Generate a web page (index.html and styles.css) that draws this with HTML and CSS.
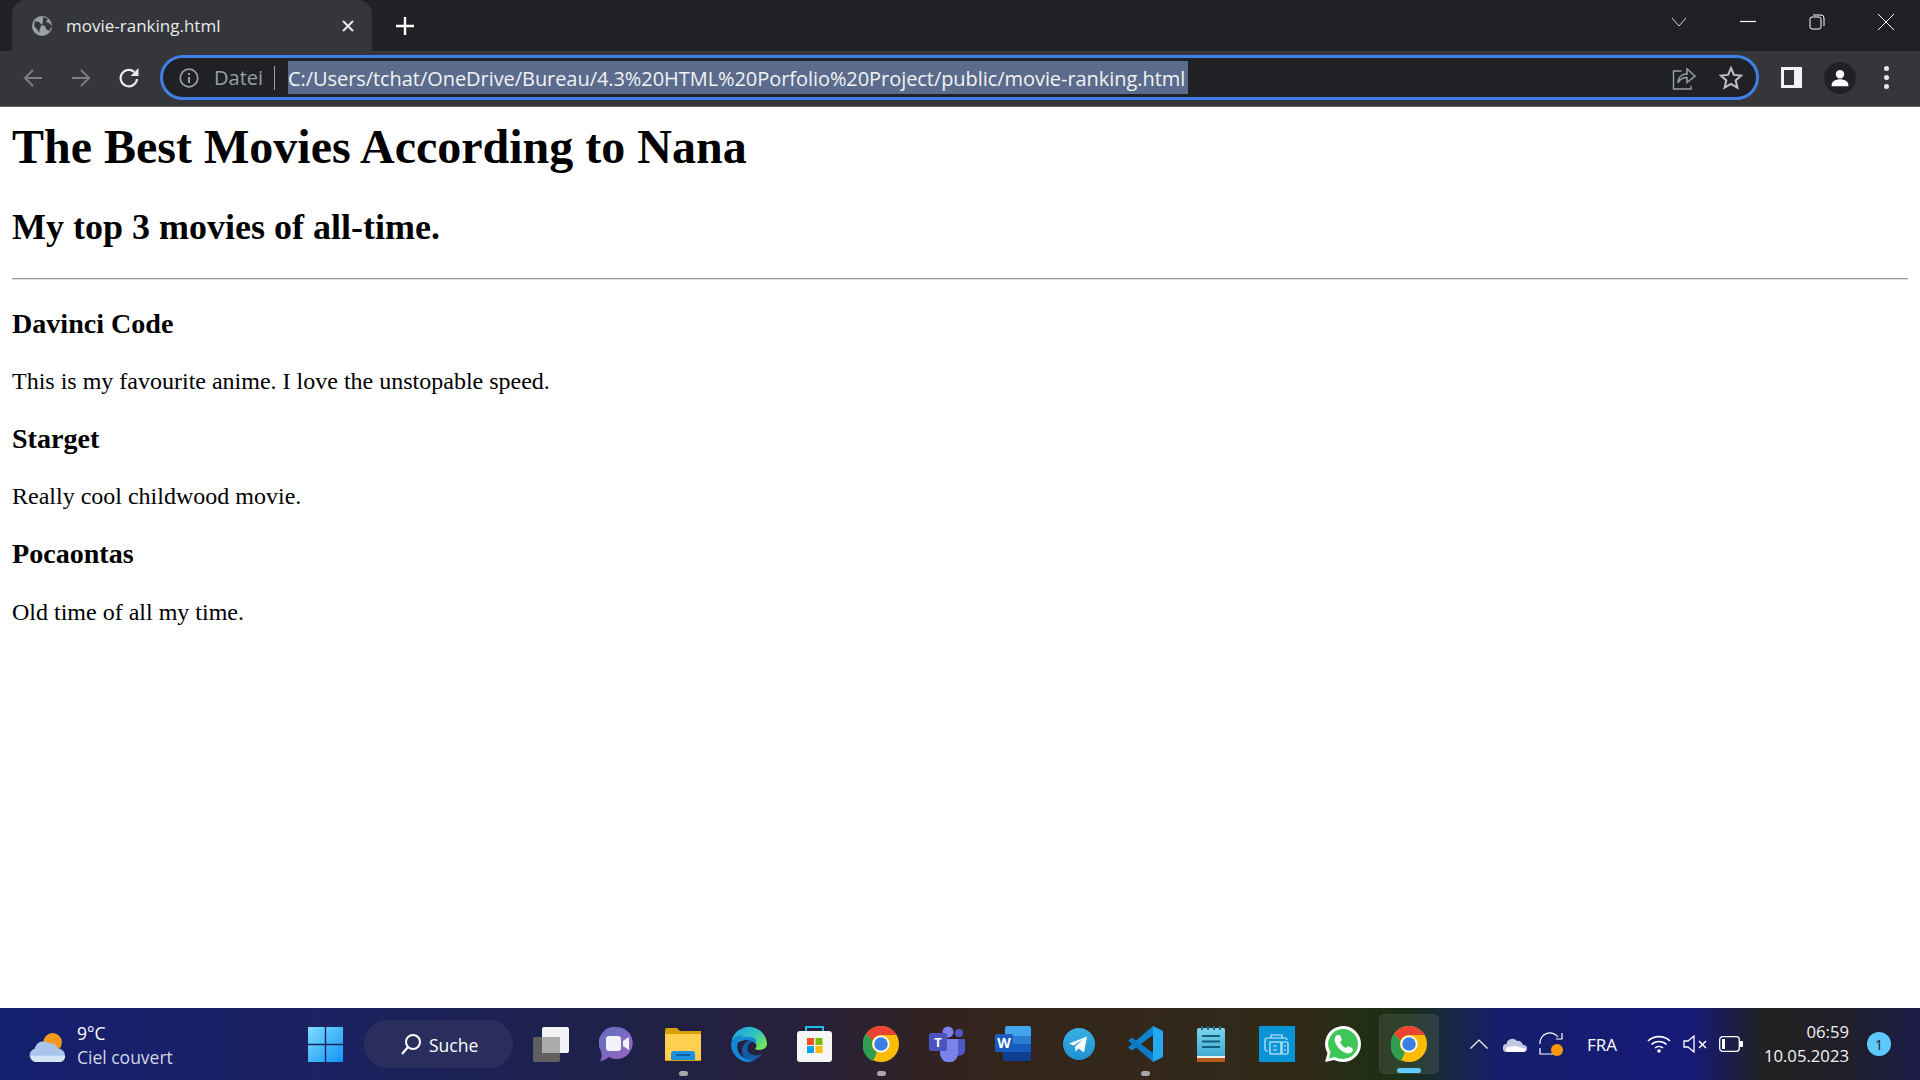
FILE: index.html
```html
<!DOCTYPE html>
<html lang="en">
<head>
<meta charset="utf-8">
<title>movie-ranking.html</title>
<link rel="stylesheet" href="styles.css">
</head>
<body>
<svg class="defs" width="0" height="0" aria-hidden="true">
  <defs>
    <symbol id="chrome" viewBox="0 0 36 36">
      <circle cx="18" cy="18" r="18" fill="#fbbc04"/>
      <path d="M18 0A18 18 0 0 1 33.6 9H18a9 9 0 0 0-8.3 5.5L3.2 7.7A18 18 0 0 1 18 0Z" fill="#ea4335"/>
      <path d="M3.2 7.7l6.4 6.6A9 9 0 0 0 14 26.2l-4 9.1A18 18 0 0 1 3.2 7.7Z" fill="#2f9e4f"/>
      <circle cx="18" cy="18" r="8.6" fill="#fff"/>
      <circle cx="18" cy="18" r="6.8" fill="#3b7ee6"/>
    </symbol>
  </defs>
</svg>
<div class="screen">
  <header class="tabstrip">
    <div class="tab">
      <svg class="favicon" viewBox="0 0 20 20"><circle cx="10" cy="10" r="10" fill="#9aa0a6"/><path d="M3 5l4 1 3 3-2 3-1 5-2-4-3-3zM11 1l5 2-2 3 3 1 3 3-3 5-3-2-1-3-3-1 1-4z" fill="#35363a"/></svg>
      <span class="tab-title">movie-ranking.html</span>
      <svg class="tab-close" viewBox="0 0 12 12"><path d="M1 1l10 10M11 1L1 11" stroke="#e8eaed" stroke-width="2"/></svg>
    </div>
    <svg class="newtab" viewBox="0 0 18 18"><path d="M9 0v18M0 9h18" stroke="#fff" stroke-width="2.4"/></svg>
    <div class="window-controls">
      <svg class="wc" viewBox="0 0 16 16"><path d="M1 4l7 8 7-8" fill="none" stroke="#d5d6d8" stroke-width="1"/></svg>
      <svg class="wc" viewBox="0 0 16 16"><path d="M0 7.5h16" stroke="#fff" stroke-width="1.2"/></svg>
      <svg class="wc" viewBox="0 0 16 16"><rect x="1" y="3" width="11" height="12" rx="2" fill="none" stroke="#fff"/><path d="M4 1h8a3 3 0 0 1 3 3v8" fill="none" stroke="#fff"/></svg>
      <svg class="wc" viewBox="0 0 16 16"><path d="M0 0l16 16M16 0L0 16" stroke="#fff" stroke-width="1"/></svg>
    </div>
  </header>
  <nav class="toolbar">
    <svg class="nav-icon" viewBox="0 0 20 20"><path d="M19 10H2M10 2l-8 8 8 8" fill="none" stroke="#7c7e82" stroke-width="2"/></svg>
    <svg class="nav-icon" viewBox="0 0 20 20"><path d="M1 10h17M10 2l8 8-8 8" fill="none" stroke="#7c7e82" stroke-width="2"/></svg>
    <svg class="nav-icon reload" viewBox="0 0 20 20"><path d="M18 11A8.200 8.200 0 1 1 15.200 3.900" fill="none" stroke="#e8eaed" stroke-width="2.200"/><path d="M19.500 0v8h-8z" fill="#e8eaed"/></svg>
    <div class="omnibox">
      <svg class="info" viewBox="0 0 20 20"><circle cx="10" cy="10" r="8.800" fill="none" stroke="#9aa0a6" stroke-width="1.700"/><path d="M10 9v6M10 5v2" stroke="#9aa0a6" stroke-width="2"/></svg>
      <span class="scheme">Datei</span>
      <span class="divider"></span>
      <span class="url">C:/Users/tchat/OneDrive/Bureau/4.3%20HTML%20Porfolio%20Project/public/movie-ranking.html</span>
      <span class="omni-space"></span>
      <svg class="omni-icon" viewBox="0 0 24 24"><path d="M9.500 5H1.500v18h17.500v-3" fill="none" stroke="#9aa0a6" stroke-width="1.400"/><path d="M6 17c0-6 4-9 9-9V3l8 7-8 6.500v-5c-4 0-7 1.500-9 5.500z" fill="none" stroke="#9aa0a6" stroke-width="1.500"/></svg>
      <svg class="omni-icon star" viewBox="0 0 24 24"><path d="M12 2l2.900 6.900 7.400.6-5.600 4.900 1.700 7.300L12 17.800l-6.400 3.900 1.700-7.300-5.600-4.900 7.400-.6z" fill="none" stroke="#bdc1c6" stroke-width="2"/></svg>
    </div>
    <span class="sidepanel"></span>
    <span class="profile"><svg viewBox="0 0 24 24"><circle cx="12" cy="7.500" r="5" fill="#fff"/><path d="M2 22v-2c0-4 5-6.500 10-6.500s10 2.500 10 6.500v2z" fill="#fff"/></svg></span>
    <span class="menu"><i></i><i></i><i></i></span>
  </nav>
  <main class="page">
    <h1>The Best Movies According to Nana</h1>
    <h2>My top 3 movies of all-time.</h2>
    <hr>
    <h3>Davinci Code</h3>
    <p>This is my favourite anime. I love the unstopable speed.</p>
    <h3>Starget</h3>
    <p>Really cool childwood movie.</p>
    <h3>Pocaontas</h3>
    <p>Old time of all my time.</p>
  </main>
  <footer class="taskbar">
    <div class="weather">
      <svg class="weather-icon" viewBox="0 0 36 30"><circle cx="23" cy="10" r="9" fill="#f39a1e"/><path d="M7 29a6.500 6.500 0 0 1-1.500-12.800A9 9 0 0 1 20 11a7 7 0 0 1 8 5.200A6.500 6.500 0 0 1 30 29z" fill="#a9c6ea"/><path d="M7 29a5 5 0 0 1-5-6h33a5 5 0 0 1-5 6z" fill="#d5e4f6"/></svg>
      <div class="weather-text"><span class="temp">9°C</span><span class="cond">Ciel couvert</span></div>
    </div>
    <svg class="start" viewBox="0 0 35 35"><defs><linearGradient id="win" x1="0" y1="0" x2="1" y2="1"><stop offset="0" stop-color="#7fdcff"/><stop offset="1" stop-color="#0f94f5"/></linearGradient></defs><path d="M0 0h16.800v16.800H0zM18.200 0H35v16.800H18.200zM0 18.200h16.800V35H0zM18.200 18.200H35V35H18.200z" fill="url(#win)"/></svg>
    <div class="search">
      <svg viewBox="0 0 22 22"><circle cx="13" cy="9" r="7" fill="none" stroke="#fff" stroke-width="2"/><path d="M8 14l-6 7" stroke="#fff" stroke-width="2.200"/></svg>
      <span>Suche</span>
    </div>
    <div class="apps">
      <div class="app"><svg viewBox="0 0 36 36"><rect x="9" y="1" width="27" height="26" rx="2" fill="#f3f3f3"/><rect x="0" y="11" width="27" height="25" rx="2" fill="#5f5f5f"/><rect x="9" y="11" width="18" height="16" fill="#aaa"/></svg></div>
      <div class="app"><svg viewBox="0 0 36 36"><defs><linearGradient id="chat" x1="0" y1="0" x2="1" y2="1"><stop offset="0" stop-color="#5f6fc0"/><stop offset="1" stop-color="#9a63c4"/></linearGradient></defs><path d="M18 1a16 16 0 1 1-8 30c-3 2-6 4-9 4 2-3 2-6 1-10A16 16 0 0 1 18 1z" fill="url(#chat)"/><rect x="7" y="10" width="15" height="15" rx="3" fill="#f2f2fa"/><path d="M24 15l6-4v13l-6-4z" fill="#f2f2fa"/></svg></div>
      <div class="app"><svg viewBox="0 0 36 34"><path d="M0 3a2 2 0 0 1 2-2h10l3 3h21v30H0z" fill="#d8a002"/><path d="M0 7h36v26H0z" fill="#ffd04f"/><path d="M6 33V27a3 3 0 0 1 3-3h18a3 3 0 0 1 3 3v6z" fill="#1b8fe0"/><path d="M11 28h14" stroke="#0d5fa8" stroke-width="2"/></svg><i class="dot"></i></div>
      <div class="app"><svg viewBox="0 0 36 36"><defs><linearGradient id="edge" x1="0.100" y1="0" x2="1" y2="0.600"><stop offset="0" stop-color="#1b9fd8"/><stop offset="0.600" stop-color="#33c6c0"/><stop offset="1" stop-color="#6ee35c"/></linearGradient></defs><path d="M1 13A18 18 0 0 1 36 18c0 4-4 6-8 6-3 0-4-1-4-2 2-1 2-3 0-5-4-4-13-4-18 0-2 1-4 3-5 5z" fill="url(#edge)"/><path d="M0 18c1-6 7-10 13-8-6 3-9 10-5 17 3 5 10 8 17 6-3 2-6 3-7 3A18 18 0 0 1 0 18z" fill="#1487d8"/><path d="M24 14c-7-1-13 4-13 11 0 6 5 10 11 9 3-1 7-3 9-6-4 2-10 2-13-1-2-2-2-6 0-9 2-2 4-3 6-4z" fill="#135ca8"/><path d="M8 14c5-4 12-4 16-1 2 2 2 3 0 4-4-4-10-3-16-3z" fill="#1487d8"/></svg></div>
      <div class="app"><svg viewBox="0 0 36 36"><rect y="5" width="35" height="31" rx="3" fill="#f6f6f6"/><path d="M9 5V1h17v4" fill="none" stroke="#1ebbee" stroke-width="2"/><rect x="10" y="12" width="7" height="7" fill="#f25022"/><rect x="18.500" y="12" width="7" height="7" fill="#7fba00"/><rect x="10" y="20" width="7" height="7" fill="#00a4ef"/><rect x="18.500" y="20" width="7" height="7" fill="#ffb900"/></svg></div>
      <div class="app"><svg viewBox="0 0 36 36"><use href="#chrome"/></svg><i class="dot"></i></div>
      <div class="app"><svg viewBox="0 0 36 36"><circle cx="19" cy="6" r="5.500" fill="#7b83eb"/><circle cx="30" cy="7" r="4" fill="#5059c9"/><path d="M27 13h8a1 1 0 0 1 1 1v10a6 6 0 0 1-9 5z" fill="#5059c9"/><path d="M11 13h17a1 1 0 0 1 1 1v13a9 9 0 0 1-18 1z" fill="#7b83eb"/><rect y="7" width="18" height="18" rx="2" fill="#4b53bc"/><text x="9" y="21" class="teams-t">T</text></svg></div>
      <div class="app"><svg viewBox="0 0 36 36"><path d="M10 2a2 2 0 0 1 2-2h22a2 2 0 0 1 2 2v8H10z" fill="#41a5ee"/><rect x="8" y="10" width="28" height="8" fill="#2b7cd3"/><rect x="8" y="18" width="28" height="8" fill="#185abd"/><path d="M8 26h28v7a2 2 0 0 1-2 2H10a2 2 0 0 1-2-2z" fill="#103f91"/><rect y="8" width="18" height="18" rx="2" fill="#1a5dbb"/><text x="9" y="22" class="word-w">W</text></svg></div>
      <div class="app"><svg class="small" viewBox="0 0 32 32"><defs><linearGradient id="tg" x1="0.500" y1="0" x2="0.500" y2="1"><stop offset="0" stop-color="#38b0e3"/><stop offset="1" stop-color="#1d93d2"/></linearGradient></defs><circle cx="16" cy="16" r="16" fill="url(#tg)"/><path d="M6 15.500l18-7-3 16-5.500-4-3 3-.5-4.800L20 11.500l-9.500 6z" fill="#fff"/></svg></div>
      <div class="app"><svg viewBox="0 0 36 36"><path d="M26 0l10 5v26l-10 5z" fill="#23a9f2"/><path d="M26 0v9L11 20l-6 4.500-4-3L26 0z" fill="#0f82d2"/><path d="M26 36v-9L11 16 5 11.500l-4 3L26 36z" fill="#0d79c6"/></svg><i class="dot"></i></div>
      <div class="app"><svg class="note" viewBox="0 0 28 36"><defs><linearGradient id="nt" x1="0" y1="0" x2="0" y2="1"><stop offset="0" stop-color="#7fd4ef"/><stop offset="1" stop-color="#3aa8cf"/></linearGradient></defs><rect y="2" width="28" height="30" rx="2" fill="url(#nt)"/><rect y="31" width="28" height="5" fill="#b8591d"/><rect y="30" width="28" height="2" fill="#f2f2f2"/><path d="M5 0v4M11 0v4M17 0v4M23 0v4" stroke="#116a8a" stroke-width="2"/><path d="M5 10h18M5 15.500h18M5 21h18" stroke="#11607f" stroke-width="2"/></svg></div>
      <div class="app"><svg viewBox="0 0 36 36"><rect width="36" height="36" fill="#0a94d8"/><g fill="none" stroke="#cfeaf8" stroke-width="1.200"><path d="M12 12V9h11v3"/><path d="M9 25H8a2 2 0 0 1-2-2v-9a2 2 0 0 1 2-2h18a2 2 0 0 1 2 2"/><rect x="11" y="16" width="11" height="12"/><rect x="23" y="16" width="6" height="12" rx="1"/><path d="M14 20h4M14 24h4M25 20h2M25 24h2"/></g></svg></div>
      <div class="app"><svg viewBox="0 0 36 36"><path d="M18 0a18 18 0 0 1 0 36c-3 0-6-1-9-2l-9 2 2.500-9A18 18 0 0 1 18 0z" fill="#fff"/><path d="M18 3a15 15 0 0 1 0 30c-3 0-6-1-8-2l-6 1.500L5.500 26A15 15 0 0 1 18 3z" fill="#3fc658"/><path d="M12 9c-2 1-3 4-2 7 2 5 6 9 11 11 3 1 6 0 7-3l-1-2-4-2-2 2c-3-1-5-4-6-6l2-2-2-5z" fill="#fff"/></svg></div>
      <div class="app active"><svg viewBox="0 0 36 36"><use href="#chrome"/></svg><i class="bar"></i></div>
    </div>
    <div class="tray">
      <svg class="tray-chevron" viewBox="0 0 18 10"><path d="M0.500 9.500L9 1l8.500 8.500" fill="none" stroke="#fff" stroke-width="1.200"/></svg>
      <svg class="tray-cloud" viewBox="0 0 24 15"><path d="M4 15a4 4 0 0 1-.5-8A6 6 0 0 1 14 4a5 5 0 0 1 6 4 3.500 3.500 0 0 1 1 7z" fill="#c3c5e4"/><path d="M4 15a4 4 0 0 1 0-5l8-1 10 2.500a3.500 3.500 0 0 1-1 3.500z" fill="#fff"/></svg>
      <svg class="tray-sync" viewBox="0 0 24 24"><path d="M1 12A10 10 0 0 1 19 5M23 1v6h-6M6 22h8M1 16v6h6" fill="none" stroke="#fff" stroke-width="1.200"/><circle cx="18" cy="18" r="6" fill="#ff9800"/></svg>
      <span class="lang">FRA</span>
      <svg class="tray-wifi" viewBox="0 0 24 18"><path d="M1 6a16 16 0 0 1 22 0M4.500 9.500a11 11 0 0 1 15 0M8 13a6 6 0 0 1 8 0" fill="none" stroke="#fff" stroke-width="1.600"/><circle cx="12" cy="16" r="1.800" fill="#fff"/></svg>
      <svg class="tray-sound" viewBox="0 0 24 18"><path d="M1 6h4l6-5v16l-6-5H1z" fill="none" stroke="#fff" stroke-width="1.300"/><path d="M16 6l7 7M23 6l-7 7" stroke="#fff" stroke-width="1.500"/></svg>
      <svg class="tray-battery" viewBox="0 0 24 16"><rect x="0.700" y="0.700" width="19.600" height="14.600" rx="3" fill="none" stroke="#fff" stroke-width="1.300"/><rect x="3" y="3" width="3" height="10" fill="#fff"/><path d="M21 5h2a1 1 0 0 1 1 1v4a1 1 0 0 1-1 1h-2z" fill="#fff"/></svg>
      <div class="clock"><span>06:59</span><span>10.05.2023</span></div>
      <span class="badge">1</span>
    </div>
  </footer>
</div>
</body>
</html>
```
FILE: styles.css
```css
* { box-sizing: border-box; }
html, body { margin: 0; padding: 0; height: 100%; overflow: hidden; }
.defs { position: absolute; }
.screen { display: flex; flex-direction: column; width: 1920px; height: 1080px; background: #fff; }

.tabstrip { flex: none; height: 51px; display: flex; align-items: flex-end; background: #202124; padding-left: 12px; font-family: "Open Sans", sans-serif; }
.tab { width: 360px; height: 51px; background: #35363a; border-radius: 14px 14px 0 0; display: flex; align-items: center; padding: 0 0 0 20px; color: #e8eaed; }
.favicon { width: 20px; height: 20px; flex: none; }
.tab-title { margin-left: 14px; font-size: 17px; width: 276px; }
.tab-close { width: 12px; height: 12px; flex: none; }
.newtab { width: 18px; height: 18px; flex: none; margin: 0 0 16px 24px; }
.window-controls { margin-left: auto; display: flex; height: 51px; align-items: center; padding: 0 26px 7px 0; gap: 53px; }
.wc { width: 16px; height: 16px; display: block; }

.toolbar { flex: none; height: 56px; background: #35363a; border-bottom: 1px solid #5f6368; display: flex; align-items: center; padding: 0 0 2px 23px; }
.nav-icon { width: 20px; height: 20px; flex: none; margin-right: 28px; }
.nav-icon.reload { margin-right: 21px; }
.omnibox { width: 1599px; height: 45px; flex: none; background: #202124; border: 3px solid #3f7fe6; border-radius: 23px; display: flex; align-items: center; padding-left: 16px; font-family: "Open Sans", sans-serif; }
.info { width: 20px; height: 20px; flex: none; }
.scheme { margin-left: 15px; font-size: 20px; color: #9aa0a6; width: 46px; }
.divider { width: 1px; height: 24px; background: #9aa0a6; margin: 0 13px 0 14px; flex: none; }
.url { background: #5a6b8c; color: #f1f3f4; font-size: 20px; line-height: 35px; height: 33px; white-space: nowrap; width: 900px; letter-spacing: -.06px; overflow: hidden; }
.omni-space { flex: 1; }
.omni-icon { width: 24px; height: 24px; flex: none; }
.star { margin: 0 13px 0 23px; }
.sidepanel { width: 21px; height: 21px; flex: none; margin-left: 22px; background: #35363a; border: 3px solid #f1f3f4; border-right-width: 8px; }
.profile { width: 32px; height: 32px; border-radius: 50%; background: #202124; flex: none; margin-left: 22px; display: flex; align-items: center; justify-content: center; }
.profile svg { width: 20px; height: 20px; }
.menu { display: flex; flex-direction: column; gap: 4px; margin-left: 28px; flex: none; }
.menu i { width: 5px; height: 5px; border-radius: 50%; background: #e8eaed; display: block; }

.page { flex: 1; min-height: 0; padding: 12px; font-family: "Liberation Serif", "Times New Roman", serif; color: #000; overflow: hidden; }
h1 { font-size: 48px; margin: 0 0 32.160px; }
h2 { font-size: 36px; margin: 32.160px 0 29.880px; }
hr { margin: 12px 0; border: 0; border-top: 1px solid #9a9a9a; border-bottom: 1px solid #e0e0e0; height: 2px; }
h3 { font-size: 28.080px; margin: 28.080px 0; }
p { font-size: 24px; margin: 24px 0; }

.taskbar { flex: none; height: 72px; display: flex; align-items: center; color: #fff; font-family: "Open Sans", sans-serif; background: linear-gradient(90deg, #141f70 0, #1c2260 18%, #1e2148 32%, #28203a 42%, #33231d 50%, #33281a 60%, #2f2a18 68%, #1a3015 73%, #151e6c 78%, #161a78 88%, #212121 92%, #1f1f2a 96%, #1c1c48 100%); }
.weather { width: 308px; flex: none; display: flex; align-items: center; padding-left: 29px; }
.weather-icon { width: 37px; height: 31px; flex: none; margin-top: 6px; }
.weather-text { margin: 2px 0 0 11px; display: flex; flex-direction: column; line-height: 24px; font-size: 17.500px; }
.cond { color: #d4d6e6; }
.start { width: 35px; height: 35px; flex: none; margin: 1px 21px 0 0; }
.search { width: 149px; height: 48px; flex: none; border-radius: 24px; background: #2a2e5c; display: flex; align-items: center; padding-left: 36px; font-size: 17.500px; margin-right: 5px; }
.search svg { width: 22px; height: 22px; margin-right: 7px; }
.search span { margin-top: 1px; }
.apps { display: flex; flex: none; width: 924px; }
.app { width: 66px; height: 60px; flex: none; display: flex; align-items: center; justify-content: center; position: relative; }
.app svg { width: 36px; height: 36px; }
.app svg.small { width: 32px; height: 32px; }
.app svg.note { width: 28px; height: 36px; }
.app.active::before { content: ""; position: absolute; left: 3px; right: 3px; top: 0; bottom: 0; background: rgba(255,255,255,.09); border: 1px solid rgba(255,255,255,.04); border-radius: 6px; }
.app.active svg { position: relative; }
.dot { position: absolute; left: 28.500px; bottom: -2px; width: 9px; height: 5px; border-radius: 3px; background: #a8a8a8; }
.bar { position: absolute; left: 21px; bottom: 1px; width: 24px; height: 5px; border-radius: 3px; background: #5fcbff; }
.teams-t, .word-w { fill: #fff; font-family: "Open Sans", sans-serif; font-weight: 700; font-size: 13px; text-anchor: middle; }
.word-w { font-size: 14px; }

.tray { flex: 1; display: flex; align-items: center; padding-left: 28px; }
.tray svg { flex: none; display: block; }
.tray-chevron { width: 18px; height: 10px; }
.tray-cloud { width: 24px; height: 15px; margin-left: 15px; }
.tray-sync { width: 24px; height: 24px; margin-left: 12px; }
.lang { font-size: 17px; width: 30px; margin-left: 24px; }
.tray-wifi { width: 24px; height: 18px; margin-left: 30px; }
.tray-sound { width: 24px; height: 18px; margin-left: 12px; }
.tray-battery { width: 24px; height: 16px; margin-left: 12px; }
.clock { width: 106px; display: flex; flex-direction: column; align-items: flex-end; font-size: 16.700px; line-height: 24px; color: #f1f1f4; }
.badge { width: 24px; height: 24px; margin-left: 18px; border-radius: 50%; background: #5fc8fb; color: #1a1a2a; font-size: 14px; display: flex; align-items: center; justify-content: center; flex: none; }
```
